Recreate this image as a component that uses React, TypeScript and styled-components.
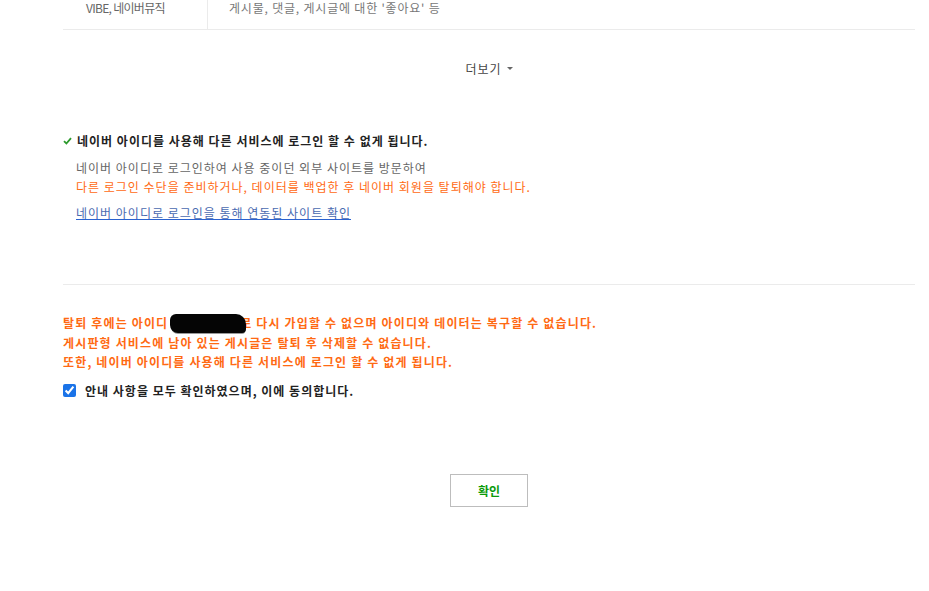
import styled, { createGlobalStyle } from "styled-components";

const GlobalStyle = createGlobalStyle`
  body {
    margin: 0;
    background: #fff;
    font-family: "Noto Sans CJK KR", "Noto Sans", sans-serif;
    color: #333;
  }
`;

const Page = styled.div`
  width: 852px;
  margin-left: 63px;
  letter-spacing: 1px;
`;

const InfoTable = styled.div`
  display: grid;
  grid-template-columns: 145px 1fr;
  height: 29px;
  border-bottom: 1px solid #ebebeb;
  font-size: 12px;
  line-height: 16px;
`;

const InfoCell = styled.div<{ $head?: boolean }>`
  padding: 0 0 12px ${({ $head }) => ($head ? "23px" : "21px")};
  color: ${({ $head }) => ($head ? "#666" : "#777")};
  letter-spacing: ${({ $head }) => ($head ? "-0.7px" : "0.8px")};
  border-right: ${({ $head }) => ($head ? "1px solid #ebebeb" : "none")};
`;

const MoreRow = styled.div`
  display: flex;
  justify-content: center;
  align-items: center;
  gap: 5px;
  margin-top: 29px;
  height: 18px;
  font-size: 12px;
  color: #444;
`;

const Caret = styled.span`
  width: 0;
  height: 0;
  border-left: 3px solid transparent;
  border-right: 3px solid transparent;
  border-top: 3px solid #666;
`;

const Notice = styled.section`
  margin-top: 55px;
  height: 152px;
  border-bottom: 1px solid #ebebeb;
`;

const NoticeTitle = styled.h3`
  display: flex;
  align-items: center;
  gap: 5px;
  margin: 0;
  height: 18px;
  font-size: 12px;
  font-weight: 700;
  color: #222;
  line-height: 18px;
`;

const NoticeBody = styled.div`
  padding-left: 13px;
  margin-top: 8px;
  font-size: 12px;
  line-height: 19px;
`;

const Line = styled.p<{ $tone?: "gray" | "orange" }>`
  margin: 0;
  color: ${({ $tone }) => ($tone === "orange" ? "#ff6a13" : "#666")};
`;

const SiteLink = styled.a`
  display: inline-block;
  margin-top: 8px;
  line-height: 18px;
  color: #4a6ab0;
  text-decoration: underline;
  text-decoration-color: #2a62d0;
`;

const Warning = styled.div`
  margin-top: 28px;
  font-size: 12px;
  font-weight: 700;
  line-height: 19px;
  letter-spacing: 1.15px;
  color: #ff6a13;
`;

const Redacted = styled.span`
  display: inline-block;
  position: relative;
  width: 76px;
  height: 19px;
  margin: 0 -6px 0 2px;
  vertical-align: -5px;
  background: #050505;
  border-radius: 6px 10px 4px 8px;
  box-shadow: 0 2px 0 -1px #999;
`;

const AgreeRow = styled.label`
  display: flex;
  align-items: center;
  gap: 9px;
  margin-top: 10px;
  height: 18px;
  font-size: 12px;
  font-weight: 700;
  color: #222;
`;

const Check = styled.input`
  width: 13px;
  height: 13px;
  margin: 0;
  accent-color: #1a73e8;
`;

const Actions = styled.div`
  display: flex;
  justify-content: center;
  margin-top: 75px;
`;

const ConfirmButton = styled.button`
  width: 78px;
  height: 33px;
  background: #fff;
  border: 1px solid #bdbdbd;
  font-family: inherit;
  font-size: 12px;
  font-weight: 700;
  letter-spacing: 0;
  color: #0a9a0a;
  cursor: pointer;
`;

function CheckMark() {
  return (
    <svg width="9" height="8" viewBox="0 0 9 8">
      <path d="M1 4.2 L3.4 6.5 L8 1.2" fill="none" stroke="#2c9a2c" strokeWidth="1.8" />
    </svg>
  );
}

export default function App() {
  return (
    <>
      <GlobalStyle />
      <Page>
        <InfoTable>
          <InfoCell $head>VIBE, 네이버뮤직</InfoCell>
          <InfoCell>게시물, 댓글, 게시글에 대한 '좋아요' 등</InfoCell>
        </InfoTable>

        <MoreRow>
          더보기 <Caret />
        </MoreRow>

        <Notice>
          <NoticeTitle>
            <CheckMark />
            네이버 아이디를 사용해 다른 서비스에 로그인 할 수 없게 됩니다.
          </NoticeTitle>
          <NoticeBody>
            <Line>네이버 아이디로 로그인하여 사용 중이던 외부 사이트를 방문하여</Line>
            <Line $tone="orange">다른 로그인 수단을 준비하거나, 데이터를 백업한 후 네이버 회원을 탈퇴해야 합니다.</Line>
            <SiteLink href="#">네이버 아이디로 로그인을 통해 연동된 사이트 확인</SiteLink>
          </NoticeBody>
        </Notice>

        <Warning>
          <div>
            탈퇴 후에는 아이디<Redacted />로 다시 가입할 수 없으며 아이디와 데이터는 복구할 수 없습니다.
          </div>
          <div>게시판형 서비스에 남아 있는 게시글은 탈퇴 후 삭제할 수 없습니다.</div>
          <div>또한, 네이버 아이디를 사용해 다른 서비스에 로그인 할 수 없게 됩니다.</div>
        </Warning>

        <AgreeRow>
          <Check type="checkbox" defaultChecked />
          안내 사항을 모두 확인하였으며, 이에 동의합니다.
        </AgreeRow>

        <Actions>
          <ConfirmButton>확인</ConfirmButton>
        </Actions>
      </Page>
    </>
  );
}
